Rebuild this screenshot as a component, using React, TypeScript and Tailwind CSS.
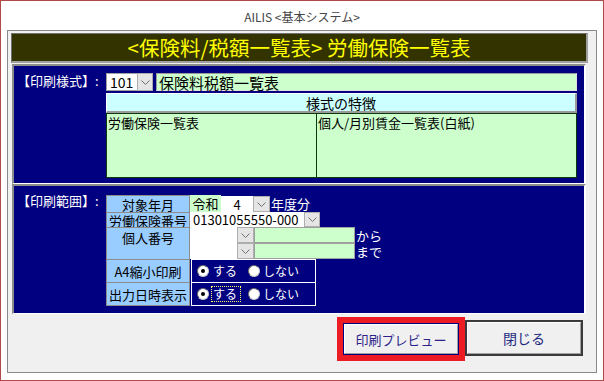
import React from "react";

const Chevron = () => (
  <svg width="9" height="5" viewBox="0 0 9 5">
    <polyline points="0.5,0.5 4.5,4.5 8.5,0.5" fill="none" stroke="#707070" strokeWidth="1" />
  </svg>
);

function DropBtn({ className }: { className: string }) {
  return (
    <div className={"flex items-center justify-center bg-[#e5e5e5] border border-[#adadad] shrink-0 " + className}>
      <Chevron />
    </div>
  );
}

function Radio({ checked }: { checked?: boolean }) {
  return (
    <div className="w-[12px] h-[12px] rounded-full bg-white border border-t-[#6a6a6a] border-l-[#6a6a6a] border-r-[#c8c8c8] border-b-[#c8c8c8] flex items-center justify-center shrink-0">
      {checked && <div className="w-[4px] h-[4px] rounded-full bg-black" />}
    </div>
  );
}

function RadioRow({ focus }: { focus?: boolean }) {
  return (
    <div className="flex items-center h-full pl-[5px] text-white text-[12px] leading-none">
      <Radio checked />
      <div className="w-[37px] ml-[2px] flex items-center">
        {focus ? (
          <span className="border border-dotted border-[#ffff66] px-[1px] h-[16px] w-[30px] flex items-center">する</span>
        ) : (
          <span className="pl-[2px]">する</span>
        )}
      </div>
      <Radio />
      <span className="ml-[3px]">しない</span>
    </div>
  );
}

export default function App() {
  return (
    <div className="w-[604px] h-[381px] border border-[#b04a4a] bg-white flex flex-col overflow-hidden font-['Noto_Sans_CJK_JP',sans-serif]">
      <div className="h-[29px] flex items-center justify-center text-[12px] leading-none text-[#444444] pt-[2px]">
        AILIS &lt;基本システム&gt;
      </div>
      <div className="mx-[6px] h-[343px] border border-[#8a8a8a] bg-[#f0f0f0] flex flex-col pl-[3px] pr-[8px] pt-[2px]">
        {/* header */}
        <div className="h-[30px] bg-[#333300] border-l border-t border-[#707070] border-r-2 border-b-2 border-r-[#a0a0a0] border-b-[#a0a0a0] flex items-center justify-center text-[20.5px] leading-none text-[#ffff00]">
          &lt;保険料/税額一覧表&gt; 労働保険一覧表
        </div>

        {/* section 1 */}
        <div className="mt-[1px] ml-[1px] w-[574px] h-[120px] bg-[#000080] border-t-2 border-l-2 border-[#8c8c8c] border-r-2 border-b border-r-white border-b-white flex">
          <div className="w-[92px] pl-[3px] pt-[8px] text-white text-[13px] leading-[14px] whitespace-nowrap">【印刷様式】:</div>
          <div className="w-[471px] flex flex-col pt-[7px]">
            <div className="flex h-[18px]">
              <div className="w-[31px] h-full bg-white border-t border-l border-b border-[#a0a0a0] flex items-center pl-[3px] text-[14px] leading-none text-black">101</div>
              <DropBtn className="w-[16px] h-full" />
              <div className="ml-[3px] flex-1 h-full bg-[#ccffcc] border border-t-[#9a9a9a] border-l-[#9a9a9a] border-r-[#e0e0e0] border-b-[#e0e0e0] flex items-center pl-[2px] text-[15px] leading-none text-black">保険料税額一覧表</div>
            </div>
            <div className="mt-[2px] h-[20px] bg-[#ccffff] border-t border-l border-white border-r-2 border-b-2 border-r-[#9a9a9a] border-b-[#9a9a9a] flex items-center justify-center text-[14px] leading-none text-black">様式の特徴</div>
            <div className="h-[65px] bg-[#ccffcc] border border-[#0b3a0b] flex text-[13px] leading-[14px] text-black">
              <div className="w-[210px] h-full border-r border-[#0b3a0b] pl-[1px] pt-[2px]">労働保険一覧表</div>
              <div className="flex-1 pl-[1px] pt-[2px]">個人/月別賃金一覧表(白紙)</div>
            </div>
          </div>
        </div>

        {/* section 2 */}
        <div className="ml-[1px] w-[574px] h-[130px] bg-[#000080] border-t-2 border-l-2 border-[#8c8c8c] border-r-2 border-b border-r-white border-b-white flex">
          <div className="w-[92px] pl-[3px] pt-[8px] text-white text-[13px] leading-[14px] whitespace-nowrap">【印刷範囲】:</div>
          <div className="flex flex-col pt-[9px] text-[13px] leading-none">
            {/* row1 */}
            <div className="flex h-[17px]">
              <div className="w-[84px] h-full bg-[#99ccff] border-l border-r border-t border-[#8c8c8c] flex items-center justify-center text-black">対象年月</div>
              <div className="w-[31px] h-full bg-[#ccffcc] flex items-center justify-center text-black">令和</div>
              <div className="w-[32px] h-[16px] mt-[1px] bg-white flex items-center justify-center text-black">4</div>
              <DropBtn className="w-[17px] h-[16px] mt-[1px]" />
              <div className="ml-[1px] flex items-center text-white">年度分</div>
            </div>
            {/* row2 */}
            <div className="flex h-[15px]">
              <div className="w-[84px] h-full bg-[#99ccff] border-l border-r border-t border-[#8c8c8c] flex items-center justify-center text-black whitespace-nowrap">労働保険番号</div>
              <div className="w-[114px] h-full bg-white flex items-center pl-[3px] text-black">01301055550-000</div>
              <DropBtn className="w-[16px] h-full" />
            </div>
            {/* row3 */}
            <div className="flex h-[32px]">
              <div className="w-[84px] h-full bg-[#99ccff] border-l border-r border-t border-[#8c8c8c] flex justify-center pt-[3px] text-black">個人番号</div>
              <div className="flex flex-col">
                <div className="flex h-[16px]">
                  <div className="w-[47px] h-full bg-white" />
                  <DropBtn className="w-[17px] h-full" />
                  <div className="w-[101px] h-full bg-[#ccffcc] border border-[#a0a0a0]" />
                  <div className="ml-[1px] flex items-center text-white">から</div>
                </div>
                <div className="flex h-[16px]">
                  <div className="w-[47px] h-full bg-white" />
                  <DropBtn className="w-[17px] h-full" />
                  <div className="w-[101px] h-full bg-[#ccffcc] border border-[#a0a0a0]" />
                  <div className="ml-[1px] flex items-center text-white">まで</div>
                </div>
              </div>
            </div>
            {/* row4 */}
            <div className="flex h-[23px]">
              <div className="w-[84px] h-full bg-[#99ccff] border-l border-r border-t border-[#8c8c8c] flex items-center justify-center text-black">A4縮小印刷</div>
              <div className="ml-[1px] w-[125px] h-full border-l border-r border-t border-white">
                <RadioRow />
              </div>
            </div>
            {/* row5 */}
            <div className="flex h-[24px]">
              <div className="w-[84px] h-full bg-[#99ccff] border border-[#8c8c8c] flex items-center justify-center text-black">出力日時表示</div>
              <div className="ml-[1px] w-[125px] h-full border border-white">
                <RadioRow focus />
              </div>
            </div>
          </div>
        </div>

        {/* buttons */}
        <div className="flex justify-end items-start pt-[3px] pr-[5px]">
          <div className="w-[128px] h-[44px] border-[6px] border-[#ed1c24]">
            <div className="w-full h-full border border-[#000080] bg-[#f0f0f0]">
              <div className="w-full h-full border-t border-l border-white border-r border-b border-r-[#a0a0a0] border-b-[#a0a0a0] flex items-center justify-center text-[13px] leading-none text-[#2e1f8a]">
                印刷プレビュー
              </div>
            </div>
          </div>
          <div className="mt-[3px] w-[118px] h-[36px] border-2 border-[#3a3a3a] bg-[#f0f0f0]">
            <div className="w-full h-full border-t border-l border-white border-r border-b border-r-[#a0a0a0] border-b-[#a0a0a0] flex items-center justify-center text-[14px] leading-none text-[#1f2a80]">
              閉じる
            </div>
          </div>
        </div>
      </div>
    </div>
  );
}
